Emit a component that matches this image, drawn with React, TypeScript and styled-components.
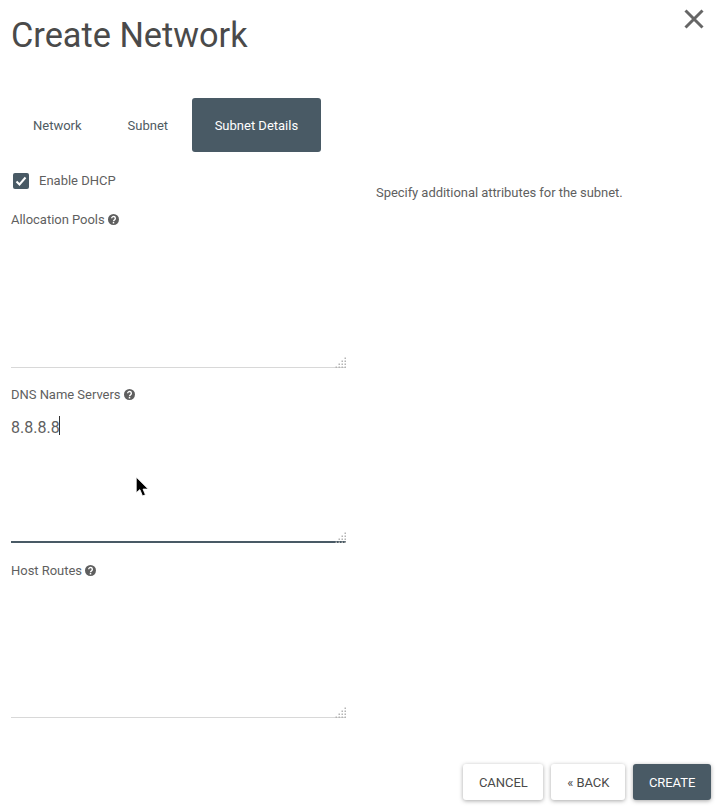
import React from 'react'
import styled, { createGlobalStyle } from 'styled-components'

const GlobalStyle = createGlobalStyle`
  html, body {
    margin: 0;
    padding: 0;
    background: #fff;
    font-family: Roboto, "Liberation Sans", sans-serif;
    color: #5f5f5f;
  }
  * {
    box-sizing: border-box;
  }
`

const Page = styled.div`
  position: relative;
  width: 720px;
  height: 810px;
  padding: 0 9px 0 11px;
  overflow: hidden;
  display: flex;
  flex-direction: column;
`

const Title = styled.h1`
  margin: 14px 0 0;
  font-size: 34.3px;
  line-height: 42px;
  font-weight: 400;
  color: #4a4a4a;
`

const CloseButton = styled.button`
  position: absolute;
  top: 8px;
  right: 15px;
  width: 22px;
  height: 22px;
  padding: 0;
  border: 0;
  background: none;
  color: #666;
`

const Tabs = styled.div`
  display: flex;
  gap: 2px;
  margin-top: 42px;
`

const Tab = styled.div<{ $active?: boolean }>`
  height: 54px;
  padding: 0 ${(p) => (p.$active ? '22.5px' : '22px')};
  display: flex;
  align-items: center;
  font-size: 13px;
  border-radius: 3px;
  color: ${(p) => (p.$active ? '#fff' : '#4f5b62')};
  background: ${(p) => (p.$active ? '#495a65' : 'transparent')};
`

const Content = styled.div`
  display: flex;
  gap: 30px;
  margin-top: 20px;
`

const FormColumn = styled.div`
  width: 335px;
  display: flex;
  flex-direction: column;
`

const HelpColumn = styled.p`
  margin: 13px 0 0;
  font-size: 13px;
  line-height: 16px;
  letter-spacing: -0.05px;
  color: #5f5f5f;
`

const CheckRow = styled.label`
  display: flex;
  align-items: center;
  gap: 10px;
  padding-left: 2px;
  height: 16px;
  font-size: 13px;
`

const CheckBox = styled.span`
  width: 16px;
  height: 16px;
  margin-top: 2px;
  border-radius: 2px;
  background: #495a65;
  display: flex;
  align-items: center;
  justify-content: center;
`

const Field = styled.div<{ $top: number }>`
  position: relative;
  display: flex;
  flex-direction: column;
  margin-top: ${(p) => p.$top}px;
`

const FieldLabel = styled.label`
  display: flex;
  align-items: center;
  gap: 3px;
  height: 16px;
  font-size: 13px;
  letter-spacing: -0.03px;
  color: #5f5f5f;
`

const TextArea = styled.textarea<{ $focused?: boolean; $height: number }>`
  display: block;
  width: 335px;
  height: ${(p) => p.$height}px;
  margin-top: 6px;
  padding: 10px 0 6px;
  border: 0;
  border-bottom: ${(p) => (p.$focused ? '2px solid #495a65' : '1px solid #d8d8d8')};
  outline: 0;
  resize: none;
  background: transparent;
  font-family: Roboto, "Liberation Sans", sans-serif;
  font-size: 16px;
  line-height: 20px;
  color: #5f5f5f;
`

const Grip = styled.svg`
  position: absolute;
  right: 0;
  bottom: 0;
`

const Caret = styled.span`
  position: absolute;
  left: 48px;
  top: 30px;
  width: 1px;
  height: 19px;
  background: #333;
`

const Pointer = styled.svg`
  position: absolute;
  left: 124px;
  top: 90px;
`

const Footer = styled.div`
  margin-top: auto;
  margin-bottom: 10px;
  display: flex;
  justify-content: flex-end;
  gap: 8px;
`

const FooterButton = styled.button<{ $primary?: boolean }>`
  height: 36px;
  padding: 0 15.75px;
  border: 0;
  border-radius: 3px;
  font-family: Roboto, "Liberation Sans", sans-serif;
  font-size: 13px;
  letter-spacing: -0.05px;
  color: ${(p) => (p.$primary ? '#fff' : '#4a4a4a')};
  background: ${(p) => (p.$primary ? '#495a65' : '#fff')};
  box-shadow: 0 1px 4px rgba(0, 0, 0, 0.35);
`

const HelpIcon = () => (
  <svg width="11" height="11" viewBox="0 0 24 24">
    <circle cx="12" cy="12" r="12" fill="#5f5f5f" />
    <path
      d="M8 9.5a4 4 0 1 1 6.2 3.3c-1.4.9-2.2 1.5-2.2 3"
      fill="none"
      stroke="#fff"
      strokeWidth="3"
    />
    <rect x="10.4" y="17.4" width="3.2" height="3.2" fill="#fff" />
  </svg>
)

const gripDots = [
  [11, 2],
  [8, 5],
  [11, 5],
  [5, 8],
  [8, 8],
  [11, 8],
  [2, 11],
  [5, 11],
  [8, 11],
  [11, 11],
]

const ResizeGrip = () => (
  <Grip width="12" height="12" viewBox="0 0 12 12">
    {gripDots.map(([x, y]) => (
      <rect key={`${x}-${y}`} x={x - 0.5} y={y - 0.5} width="1.5" height="1.5" fill="#b4b4b4" />
    ))}
  </Grip>
)

const App = () => {
  return (
    <Page>
      <GlobalStyle />
      <Title>Create Network</Title>
      <CloseButton aria-label="Close">
        <svg width="22" height="22" viewBox="0 0 22 22">
          <path d="M2.5 2.5 L19.5 19.5 M19.5 2.5 L2.5 19.5" stroke="currentColor" strokeWidth="3" />
        </svg>
      </CloseButton>
      <Tabs>
        <Tab>Network</Tab>
        <Tab>Subnet</Tab>
        <Tab $active>Subnet Details</Tab>
      </Tabs>
      <Content>
        <FormColumn>
          <CheckRow>
            <CheckBox>
              <svg width="12" height="12" viewBox="0 0 12 12">
                <path d="M1.5 6.5 L4.5 9.5 L10.5 2.5" fill="none" stroke="#fff" strokeWidth="2" />
              </svg>
            </CheckBox>
            Enable DHCP
          </CheckRow>
          <Field $top={23}>
            <FieldLabel>
              Allocation Pools <HelpIcon />
            </FieldLabel>
            <TextArea $height={135} />
            <ResizeGrip />
          </Field>
          <Field $top={18}>
            <FieldLabel>
              DNS Name Servers <HelpIcon />
            </FieldLabel>
            <TextArea $focused $height={135} defaultValue="8.8.8.8" />
            <ResizeGrip />
            <Caret />
            <Pointer width="15" height="22" viewBox="0 0 14 21">
              <path
                d="M1 1 L1 16 L4.5 13 L7 19 L9.8 18 L7.5 12.5 L12.5 12.5 Z"
                fill="#000"
                stroke="#fff"
                strokeWidth="0.8"
              />
            </Pointer>
          </Field>
          <Field $top={19}>
            <FieldLabel>
              Host Routes <HelpIcon />
            </FieldLabel>
            <TextArea $height={134} />
            <ResizeGrip />
          </Field>
        </FormColumn>
        <HelpColumn>Specify additional attributes for the subnet.</HelpColumn>
      </Content>
      <Footer>
        <FooterButton>CANCEL</FooterButton>
        <FooterButton>« BACK</FooterButton>
        <FooterButton $primary>CREATE</FooterButton>
      </Footer>
    </Page>
  )
}

export default App
